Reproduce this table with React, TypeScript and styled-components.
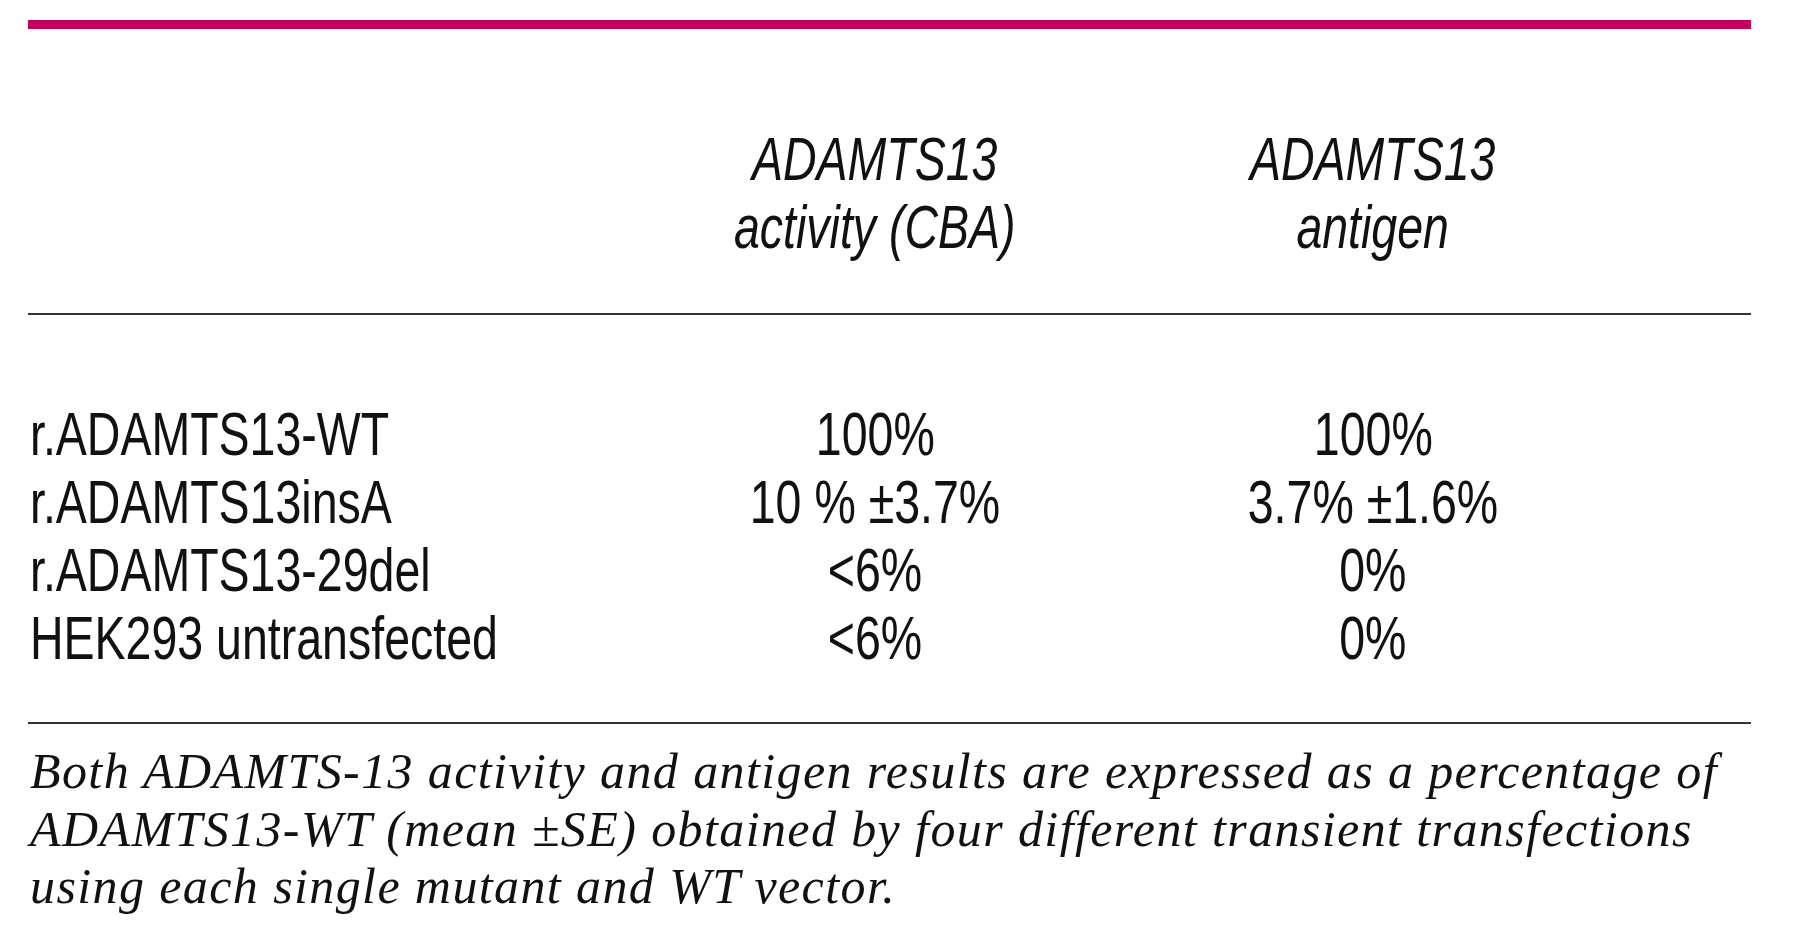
import React from "react";
import styled, { createGlobalStyle } from "styled-components";

const Global = createGlobalStyle`
  html, body { margin: 0; padding: 0; background: #ffffff; }
  body { font-family: "Liberation Sans", Arial, sans-serif; color: #111; }
`;

const Page = styled.div`
  width: 1723px;
  margin-left: 28px;
  display: flex;
  flex-direction: column;
`;

const TopBar = styled.div`
  margin-top: 20px;
  height: 9px;
  background: #c4005e;
`;

const Rule = styled.div`
  height: 2px;
  background: #333333;
`;

const Grid = styled.div<{ $padTop: number; $padBottom: number }>`
  display: grid;
  grid-template-columns: 598px 498px 498px 1fr;
  padding-top: ${(p) => p.$padTop}px;
  padding-bottom: ${(p) => p.$padBottom}px;
`;

const Cell = styled.div<{ $align: "left" | "center" }>`
  text-align: ${(p) => p.$align};
  padding-left: ${(p) => (p.$align === "left" ? "2px" : "0")};
  font-size: 62px;
  line-height: 68px;
  white-space: nowrap;
`;

const Condensed = styled.span<{ $origin: "left" | "center"; $italic?: boolean }>`
  display: inline-block;
  transform: scaleX(0.75);
  transform-origin: ${(p) => (p.$origin === "left" ? "left center" : "center center")};
  font-style: ${(p) => (p.$italic ? "italic" : "normal")};
  color: #111;
`;

const Footnote = styled.div`
  margin-top: 19px;
  padding-left: 2px;
  font-family: "Liberation Serif", "Times New Roman", serif;
  font-style: italic;
  font-size: 50px;
  letter-spacing: 1.4px;
  line-height: 57.5px;
  color: #111;
`;

const FootLine = styled.div`
  white-space: nowrap;
`;

const rows: [string, string, string][] = [
  ["r.ADAMTS13-WT", "100%", "100%"],
  ["r.ADAMTS13insA", "10 % \u00b13.7%", "3.7% \u00b11.6%"],
  ["r.ADAMTS13-29del", "<6%", "0%"],
  ["HEK293 untransfected", "<6%", "0%"],
];

const footLines = [
  "Both ADAMTS-13 activity and antigen results are expressed as a percentage of",
  "ADAMTS13-WT (mean \u00b1SE) obtained by four different transient transfections",
  "using each single mutant and WT vector.",
];

export default function App() {
  return (
    <>
      <Global />
      <Page>
        <TopBar />
        <Grid $padTop={96} $padBottom={52}>
          <Cell $align="left" />
          <Cell $align="center">
            <Condensed $origin="center" $italic>
              ADAMTS13
              <br />
              activity (CBA)
            </Condensed>
          </Cell>
          <Cell $align="center">
            <Condensed $origin="center" $italic>
              ADAMTS13
              <br />
              antigen
            </Condensed>
          </Cell>
          <Cell $align="left" />
        </Grid>
        <Rule />
        <Grid $padTop={85} $padBottom={50}>
          {rows.map(([label, act, ant]) => (
            <React.Fragment key={label}>
              <Cell $align="left">
                <Condensed $origin="left">{label}</Condensed>
              </Cell>
              <Cell $align="center">
                <Condensed $origin="center">{act}</Condensed>
              </Cell>
              <Cell $align="center">
                <Condensed $origin="center">{ant}</Condensed>
              </Cell>
              <Cell $align="left" />
            </React.Fragment>
          ))}
        </Grid>
        <Rule />
        <Footnote>
          {footLines.map((line) => (
            <FootLine key={line}>{line}</FootLine>
          ))}
        </Footnote>
      </Page>
    </>
  );
}
